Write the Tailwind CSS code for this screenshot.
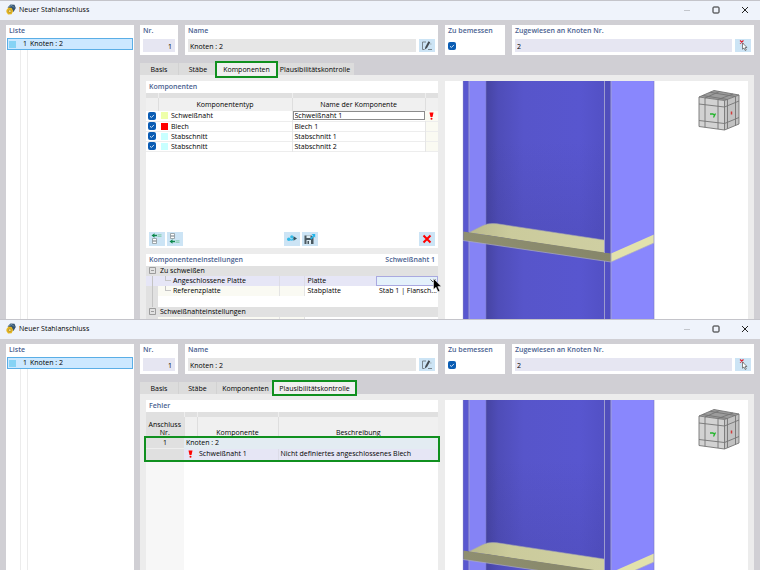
<!DOCTYPE html>
<html lang="de">

<head>
    <meta charset="UTF-8">
    <meta name="viewport" content="width=device-width, initial-scale=1.0">
    <title>Neuer Stahlanschluss</title>
    <script src="https://cdn.jsdelivr.net/npm/@tailwindcss/browser@4"></script>
</head>

<body class="h-screen overflow-hidden flex flex-col bg-[#d0cfd4] font-['Open_Sans','Noto_Sans',sans-serif] text-[7px] leading-[10px] text-black">

    <!-- Shared icons -->
    <svg class="absolute size-0" aria-hidden="true">
        <defs>
            <linearGradient id="web" x1="0" x2="1" y1="0" y2="0">
                <stop offset="0" stop-color="#4644a2" />
                <stop offset="0.1" stop-color="#4f4db8" />
                <stop offset="0.3" stop-color="#5755ca" />
                <stop offset="0.75" stop-color="#5856cf" />
                <stop offset="1" stop-color="#514fc2" />
            </linearGradient>
            <linearGradient id="shade" x1="0" x2="0" y1="0" y2="1">
                <stop offset="0" stop-color="#3a388c" stop-opacity="0" />
                <stop offset="1" stop-color="#3a388c" stop-opacity="0.2" />
            </linearGradient>
            <linearGradient id="plate" x1="0" x2="1" y1="0" y2="0">
                <stop offset="0" stop-color="#b9b98c" />
                <stop offset="0.3" stop-color="#cbcb9c" />
                <stop offset="1" stop-color="#cfcfa2" />
            </linearGradient>
            <linearGradient id="edge" x1="0" x2="1" y1="0" y2="0">
                <stop offset="0" stop-color="#8f8f70" />
                <stop offset="1" stop-color="#86866a" />
            </linearGradient>
        </defs>
        <symbol id="logo" viewBox="0 0 10 11">
            <path d="M1.5 3.5 4.5.6l4 .2L9.8 4 7.5 8 5 4.5z" fill="#35526f" />
            <path d="M3 2.5 6 1.5 8 3.5" fill="none" stroke="#7fa6c4" stroke-width=".8" />
            <path d="M.5 6 2.5 3.6l3.2.4L7.2 7 5.6 10.2l-3.6.2L.4 8z" fill="#e3b41f" />
            <circle cx="3.8" cy="7.2" r="1.4" fill="#f7e08c" stroke="#9c7b1a" stroke-width=".6" />
        </symbol>
        <symbol id="check" viewBox="0 0 8 8">
            <path d="M2 4.2 3.4 5.5 6 2.9" fill="none" stroke="#fff" stroke-width=".8" />
        </symbol>
        <symbol id="edit" viewBox="0 0 16 13">
            <path d="M7 3H3.5v7.500H5.500M9 10.500h4" fill="none" stroke="#6e7880" stroke-width=".9" />
            <path d="M5.800 10.500 6.300 8 9.500 2.200 11.200 3.200 8 9z" fill="#444c52" />
            <path d="M11 5h1.500" stroke="#99a5aa" stroke-width=".8" />
        </symbol>
        <symbol id="pick" viewBox="0 0 16 13">
            <path d="M5 1.500 8.500 4.500M8.500 1.500 5 4.500" stroke="#e02030" stroke-width="1.200" />
            <path d="M7.500 4v6.200l1.500-1.200 1.200 2.500 1.100-.5-1.200-2.500h2z" fill="#fff" stroke="#555" stroke-width=".7" />
        </symbol>
        <symbol id="insert-up" viewBox="0 0 16 14">
            <path d="M2.500 3.500 5.500 1.200v1.500H8v1.600H5.500v1.500z" fill="#0d8a4c" />
            <path d="M8.500 2.800h4M8.500 4.300h4" stroke="#6fc79a" stroke-width=".8" />
            <path d="M3.500 6.500h4v2.500h-4zM3.500 9h4v2.500h-4z" fill="#fff" stroke="#8b959b" stroke-width=".8" />
        </symbol>
        <symbol id="insert-down" viewBox="0 0 16 14">
            <path d="M3.500 1.500h4V4h-4zM3.500 4h4v2.500h-4z" fill="#fff" stroke="#8b959b" stroke-width=".8" />
            <path d="M2.500 9.500 5.500 7.200v1.500H8v1.600H5.500v1.500z" fill="#0d8a4c" />
            <path d="M8.500 8.800h4M8.500 10.300h4" stroke="#6fc79a" stroke-width=".8" />
        </symbol>
        <symbol id="link" viewBox="0 0 16 14">
            <circle cx="4.800" cy="7.200" r="1.800" fill="#32bbe8" />
            <circle cx="7.800" cy="4.800" r="1.600" fill="#32bbe8" />
            <path d="M5 7.500 8 8 10 6" fill="none" stroke="#32bbe8" stroke-width="1.200" />
            <path d="M9.500 4.300 13 6.500 9.500 8.800z" fill="#37525e" />
        </symbol>
        <symbol id="save" viewBox="0 0 16 14">
            <path d="M2.500 3.500h7l2 2v6.500h-9z" fill="#4a5961" />
            <path d="M4.500 3.500h4V6h-4zM4.500 8h4.500v4H4.500z" fill="#dcebf3" />
            <path d="M5.500 9h1.500v3H5.500z" fill="#4a5961" />
            <path d="M8 6.500 11 3.500 9.500 2h3.700v3.700L12 4.500 9.500 7.500z" fill="#22b5ea" />
        </symbol>
        <symbol id="delete" viewBox="0 0 16 14">
            <path d="M4.500 3.500 11.500 10.500M11.500 3.500 4.500 10.500" stroke="#f00" stroke-width="2" />
        </symbol>
        <symbol id="alert" viewBox="0 0 4 8">
            <path d="M0 .5h4L3 5H1z" fill="#f00" />
            <circle cx="2" cy="6.700" r="1" fill="#f00" />
        </symbol>
        <symbol id="minimize" viewBox="0 0 8 8">
            <path d="M1 4.500h6" stroke="#c3c6cc" stroke-width="1" />
        </symbol>
        <symbol id="maximize" viewBox="0 0 8 8">
            <rect x="1" y="1" width="6" height="6" rx=".8" fill="none" stroke="#222" stroke-width="1" />
        </symbol>
        <symbol id="close" viewBox="0 0 8 8">
            <path d="M1 1 7 7M7 1 1 7" stroke="#222" stroke-width="1" />
        </symbol>
        <symbol id="cube" viewBox="0 0 42 42">
            <path d="M1 8 16 1.500 41 6 26.500 11.500z" fill="#9c9c9c" />
            <path d="M1 8 26.500 11.500V41L1 37.500z" fill="#d2d2d2" />
            <path d="M26.500 11.500 41 6V35L26.500 41z" fill="#c2c2c2" />
            <path d="M1 8 16 1.500 41 6 26.500 11.500zM1 8V37.500L26.500 41V11.500M26.500 41 41 35V6M7 9V38.300M20 10.700V40M1 15 26.500 18 41 12M1 31.500 26.500 34.500 41 28.500M29.500 10.500V39.700M37.500 7.500V36.500M7 9 21.500 2.500M20 10.500 35 5M4.500 6.500 29.500 10.500M12 3.300 37.500 7.500" fill="none" stroke="#747474" stroke-width=".9" />
            <path d="M12 25h2.500M14.500 24.500l2 2M17.500 24.500 15.500 28.500" fill="none" stroke="#23b52c" stroke-width="1.300" />
            <path d="M33.500 22.500v3" stroke="#d03a3a" stroke-width="1.500" />
        </symbol>
        <!-- Column with stiffener plate -->
        <symbol id="column" viewBox="0 0 303 238">
            <rect x="18" width="191" height="238" fill="#8987fd" />
            <rect x="18" width="6" height="238" fill="#5957cf" />
            <rect x="24" width="17" height="238" fill="#8583f5" />
            <rect x="41" width="125" height="238" fill="url(#web)" />
            <path d="M41 60H159V160L41 144z" fill="url(#shade)" />
            <path d="M24 151.500 37 145Q44 141 57 143.500L159 159V172z" fill="url(#plate)" />
            <path d="M24 151.500 37 145Q44 141 57 143.500L159 159" fill="none" stroke="#a3a4b0" stroke-width=".6" />
            <path d="M18 150.500 166 172.500V181L18 159.500z" fill="url(#edge)" />
            <path d="M166 172.500 209 153.500V162L166 181z" fill="#e2e2ac" />
            <rect x="159.500" width="6" height="171.500" fill="#504ebc" />
            <path d="M24 0V151M24 160V238M159.500 0V172M159.500 180V238M166 0V238" stroke="#a5a4cf" stroke-width=".9" />
            <path d="M41 0V144M41 163V238M18.300 0V238M209 0V238" stroke="#7b7abf" stroke-width=".6" />
            <path d="M18 159.500 166 181 209 162" fill="none" stroke="#aaaac4" stroke-width=".7" />
        </symbol>
    </svg>

    <!-- Window 1: Komponenten -->
    <section class="relative shrink-0 border-t border-[#c4c4ca]">
        <header class="flex items-center h-[19px] pl-1.5 pr-[11px] pb-0.5 bg-[#eff3fb]">
            <svg class="w-[10px] h-[11px]"><use href="#logo" /></svg>
            <h1 class="ml-[3px] flex-1">Neuer Stahlanschluss</h1>
            <div class="flex gap-[21px]">
                <button aria-label="Minimieren"><svg class="size-2"><use href="#minimize" /></svg></button>
                <button aria-label="Maximieren"><svg class="size-2"><use href="#maximize" /></svg></button>
                <button aria-label="Schließen"><svg class="size-2"><use href="#close" /></svg></button>
            </div>
        </header>

        <div class="flex gap-1.5 px-1.5 pt-[5px]">
            <!-- List -->
            <aside class="w-[128px] shrink-0 flex flex-col bg-white pr-px">
                <h2 class="h-[13px] pl-[3px] pt-px text-[#4a6190] font-semibold">Liste</h2>
                <div class="flex items-center h-3 ml-px border border-[#5aaee6] bg-[#cce8ff]">
                    <span class="ml-px size-[7px] bg-[#86d3f5]"></span>
                    <span class="w-[11px] text-right">1</span>
                    <span class="ml-[3px]">Knoten : 2</span>
                </div>
                <div class="flex-1 ml-3.5 w-2 border-x border-[#ececec]"></div>
            </aside>

            <div class="flex-1 min-w-0">
                <div class="grid grid-cols-[38px_253px_60px_1fr] gap-x-[7px]">
                    <div class="h-[30px] px-[3px] bg-white">
                        <label for="nr-1" class="block h-3.5 pt-px text-[#4a6190] font-semibold">Nr.</label>
                        <input id="nr-1" value="1" class="block w-full h-[13px] px-[3px] pt-px bg-[#e6e6f2] text-right">
                    </div>
                    <div class="h-[30px] px-[3px] bg-white">
                        <label for="name-1" class="block h-3.5 pt-px text-[#4a6190] font-semibold">Name</label>
                        <div class="flex gap-[3px]">
                            <input id="name-1" value="Knoten : 2" class="flex-1 min-w-0 h-[13px] px-0.5 pt-px bg-[#e6e6e6]">
                            <button aria-label="Bearbeiten" class="bg-[#cce4f5]"><svg class="w-4 h-[13px]"><use href="#edit" /></svg></button>
                        </div>
                    </div>
                    <div class="h-[30px] px-[3px] bg-white">
                        <label for="design-1" class="block h-[17px] pt-px text-[#4a6190] font-semibold whitespace-nowrap">Zu bemessen</label>
                        <span class="grid size-2">
                            <input id="design-1" type="checkbox" checked class="col-start-1 row-start-1 appearance-none size-2 rounded-xs bg-[#0a5cb3]">
                            <svg class="col-start-1 row-start-1 size-2 pointer-events-none"><use href="#check" /></svg>
                        </span>
                    </div>
                    <div class="h-[30px] px-[3px] bg-white">
                        <label for="assigned-1" class="block h-3.5 pt-px text-[#4a6190] font-semibold">Zugewiesen an Knoten Nr.</label>
                        <div class="flex gap-[3px]">
                            <input id="assigned-1" value="2" class="flex-1 min-w-0 h-[13px] px-0.5 pt-px bg-[#e6e6f2]">
                            <button aria-label="Knoten wählen" class="bg-[#cce4f5]"><svg class="w-4 h-[13px]"><use href="#pick" /></svg></button>
                        </div>
                    </div>
                </div>

                <!-- Tabs -->
                <nav class="flex h-3 mt-2">
                    <button class="w-[39px] pt-px bg-[#dcdcdc] border-r border-[#d2d2d2]">Basis</button>
                    <button class="w-[38px] pt-px bg-[#dcdcdc]">Stäbe</button>
                    <button class="relative z-10 w-[59px] h-[13px] bg-[#f0f0f0] outline-2 outline-[#10901f]">Komponenten</button>
                    <button class="w-[78px] pt-px bg-[#dcdcdc]">Plausibilitätskontrolle</button>
                </nav>

                <div class="flex gap-[7px] px-1.5 pt-1.5 bg-[#ececec]">
                    <div class="w-[292px] shrink-0">
                        <div class="bg-white">
                            <h2 class="h-3 pl-[3px] pt-px text-[#4a6190] font-semibold">Komponenten</h2>
                            <table class="w-full table-fixed border-collapse">
                                <colgroup>
                                    <col class="w-3">
                                    <col class="w-[134px]">
                                    <col>
                                    <col class="w-[13px]">
                                </colgroup>
                                <thead>
                                    <tr class="h-[5px] bg-[#e0e0e0]">
                                        <td class="border-r border-[#eee]"></td>
                                        <td class="border-r border-[#eee]"></td>
                                        <td class="border-r border-[#eee]"></td>
                                        <td></td>
                                    </tr>
                                    <tr class="h-[13px] bg-[#f0f0f0]">
                                        <th class="p-0 border-r border-[#dedede]"></th>
                                        <th class="p-0 border-r border-[#dedede] font-normal">Komponententyp</th>
                                        <th class="p-0 border-r border-[#dedede] font-normal">Name der Komponente</th>
                                        <th class="p-0"></th>
                                    </tr>
                                </thead>
                                <tbody class="leading-[9px]">
                                    <tr class="h-[10px] border-b border-[#ededed]">
                                        <td class="p-0 pl-0.5">
                                            <span class="grid size-2">
                                                <input type="checkbox" checked aria-label="Schweißnaht 1" class="col-start-1 row-start-1 appearance-none size-2 rounded-xs bg-[#0a5cb3]">
                                                <svg class="col-start-1 row-start-1 size-2 pointer-events-none"><use href="#check" /></svg>
                                            </span>
                                        </td>
                                        <td class="p-0 border-r border-[#e6e6e6]">
                                            <div class="flex items-center gap-[3px] pl-[3px]"><span class="size-[7px] bg-[#eeffaa]"></span>Schweißnaht</div>
                                        </td>
                                        <td class="p-0"><input value="Schweißnaht 1" aria-label="Name" class="block w-full h-[9px] px-0.5 outline outline-[#8c8c8c] -outline-offset-1"></td>
                                        <td class="p-0 bg-[#fafaf2]"><svg class="mx-auto w-[5px] h-2"><use href="#alert" /></svg></td>
                                    </tr>
                                    <tr class="h-[10px] border-b border-[#ededed]">
                                        <td class="p-0 pl-0.5">
                                            <span class="grid size-2">
                                                <input type="checkbox" checked aria-label="Blech 1" class="col-start-1 row-start-1 appearance-none size-2 rounded-xs bg-[#0a5cb3]">
                                                <svg class="col-start-1 row-start-1 size-2 pointer-events-none"><use href="#check" /></svg>
                                            </span>
                                        </td>
                                        <td class="p-0 border-r border-[#e6e6e6]">
                                            <div class="flex items-center gap-[3px] pl-[3px]"><span class="size-[7px] bg-[#ff0000]"></span>Blech</div>
                                        </td>
                                        <td class="p-0 pl-0.5 border-r border-[#e6e6e6]">Blech 1</td>
                                        <td class="p-0 bg-[#fafaf2]"></td>
                                    </tr>
                                    <tr class="h-[10px] border-b border-[#ededed]">
                                        <td class="p-0 pl-0.5">
                                            <span class="grid size-2">
                                                <input type="checkbox" checked aria-label="Stabschnitt 1" class="col-start-1 row-start-1 appearance-none size-2 rounded-xs bg-[#0a5cb3]">
                                                <svg class="col-start-1 row-start-1 size-2 pointer-events-none"><use href="#check" /></svg>
                                            </span>
                                        </td>
                                        <td class="p-0 border-r border-[#e6e6e6]">
                                            <div class="flex items-center gap-[3px] pl-[3px]"><span class="size-[7px] bg-[#c8ffff]"></span>Stabschnitt</div>
                                        </td>
                                        <td class="p-0 pl-0.5 border-r border-[#e6e6e6]">Stabschnitt 1</td>
                                        <td class="p-0 bg-[#fafaf2]"></td>
                                    </tr>
                                    <tr class="h-[10px] border-b border-[#ededed]">
                                        <td class="p-0 pl-0.5">
                                            <span class="grid size-2">
                                                <input type="checkbox" checked aria-label="Stabschnitt 2" class="col-start-1 row-start-1 appearance-none size-2 rounded-xs bg-[#0a5cb3]">
                                                <svg class="col-start-1 row-start-1 size-2 pointer-events-none"><use href="#check" /></svg>
                                            </span>
                                        </td>
                                        <td class="p-0 border-r border-[#e6e6e6]">
                                            <div class="flex items-center gap-[3px] pl-[3px]"><span class="size-[7px] bg-[#c8ffff]"></span>Stabschnitt</div>
                                        </td>
                                        <td class="p-0 pl-0.5 border-r border-[#e6e6e6]">Stabschnitt 2</td>
                                        <td class="p-0 bg-[#fafaf2]"></td>
                                    </tr>
                                </tbody>
                            </table>
                            <div class="flex justify-between px-[3px] pt-20 pb-0.5">
                                <div class="flex gap-0.5">
                                    <button aria-label="Davor einfügen" class="bg-[#cce4f5]"><svg class="w-4 h-3.5"><use href="#insert-up" /></svg></button>
                                    <button aria-label="Danach einfügen" class="bg-[#cce4f5]"><svg class="w-4 h-3.5"><use href="#insert-down" /></svg></button>
                                </div>
                                <div class="flex gap-0.5">
                                    <button aria-label="Verknüpfen" class="bg-[#cce4f5]"><svg class="w-4 h-3.5"><use href="#link" /></svg></button>
                                    <button aria-label="Speichern" class="bg-[#cce4f5]"><svg class="w-4 h-3.5"><use href="#save" /></svg></button>
                                </div>
                                <button aria-label="Löschen" class="bg-[#cce4f5]"><svg class="w-4 h-3.5"><use href="#delete" /></svg></button>
                            </div>
                        </div>

                        <!-- Component settings -->
                        <div class="mt-1.5 bg-white">
                            <div class="flex justify-between h-3 px-[3px] pt-px text-[#4a6190] font-semibold">
                                <h2>Komponenteneinstellungen</h2>
                                <span>Schweißnaht 1</span>
                            </div>
                            <table class="w-full table-fixed border-collapse">
                                <colgroup>
                                    <col class="w-3">
                                    <col class="w-[121px]">
                                    <col class="w-[25px]">
                                    <col class="w-[72px]">
                                    <col>
                                </colgroup>
                                <tbody>
                                    <tr class="h-[10px] bg-[#e1e1e1]">
                                        <td class="p-0 pl-[3px]">
                                            <svg class="size-[7px]" viewBox="0 0 7 7">
                                                <path d="M.5.5h6v6h-6zM2 3.500h3" fill="none" stroke="#8a8a8a" stroke-width=".8" />
                                            </svg>
                                        </td>
                                        <td colspan="4" class="p-0 pl-0.5">Zu schweißen</td>
                                    </tr>
                                    <tr class="h-[10px] bg-[#e6e6f6]">
                                        <td class="p-0"><span class="block ml-1.5 h-[10px] border-l border-[#c4c4c4]"></span></td>
                                        <td class="p-0">
                                            <div class="flex gap-0.5 pl-[7px]"><span class="w-1.5 h-[5px] border-l border-b border-[#c4c4c4]"></span>Angeschlossene Platte</div>
                                        </td>
                                        <td class="p-0 border-x border-[#dcdce6]"></td>
                                        <td class="p-0 pl-[3px]">Platte</td>
                                        <td class="p-0">
                                            <div class="grid">
                                                <select aria-label="Platte" class="col-start-1 row-start-1 appearance-none w-full h-[10px] border border-[#a9a9e0] bg-[#e4f1fb]">
                                                    <option></option>
                                                </select>
                                                <svg class="col-start-1 row-start-1 justify-self-end self-center mr-0.5 w-1.5 h-1 pointer-events-none" viewBox="0 0 6 4">
                                                    <path d="M.5.5 3 3 5.500.5" fill="none" stroke="#333" stroke-width=".8" />
                                                </svg>
                                            </div>
                                        </td>
                                    </tr>
                                    <tr class="h-[10px]">
                                        <td class="p-0 bg-[#e1e1e1]"><span class="block ml-1.5 h-[10px] border-l border-[#c4c4c4]"></span></td>
                                        <td class="p-0 bg-[#fafaf3]">
                                            <div class="flex gap-0.5 pl-[7px]"><span class="w-1.5 h-[5px] border-l border-b border-[#c4c4c4]"></span>Referenzplatte</div>
                                        </td>
                                        <td class="p-0 border-x border-[#e4e4e4] bg-[#fafaf3]"></td>
                                        <td class="p-0 pl-[3px]">Stabplatte</td>
                                        <td class="p-0 pl-[3px] whitespace-nowrap">Stab 1 | Flansch...</td>
                                    </tr>
                                    <tr class="h-[11px]">
                                        <td class="p-0 bg-[#e1e1e1]"><span class="block ml-1.5 h-[11px] border-l border-[#c4c4c4]"></span></td>
                                        <td colspan="4" class="p-0"></td>
                                    </tr>
                                    <tr class="h-[10px] bg-[#e1e1e1]">
                                        <td class="p-0 pl-[3px]">
                                            <svg class="size-[7px]" viewBox="0 0 7 7">
                                                <path d="M.5.5h6v6h-6zM2 3.500h3" fill="none" stroke="#8a8a8a" stroke-width=".8" />
                                            </svg>
                                        </td>
                                        <td colspan="4" class="p-0 pl-0.5">Schweißnahteinstellungen</td>
                                    </tr>
                                    <tr class="h-0.5">
                                        <td class="p-0 bg-[#e1e1e1]"></td>
                                        <td class="p-0 bg-[#fafaf3]"></td>
                                        <td class="p-0 border-x border-[#e4e4e4] bg-[#fafaf3]"></td>
                                        <td class="p-0"></td>
                                        <td class="p-0"></td>
                                    </tr>
                                </tbody>
                            </table>
                        </div>
                    </div>

                    <!-- 3D view -->
                    <div class="relative flex-1 bg-white">
                        <svg class="w-[303px] h-[238px]"><use href="#column" /></svg>
                        <svg class="absolute top-2 right-2 size-[42px]"><use href="#cube" /></svg>
                        <svg class="absolute top-[197px] -left-3 w-[9px] h-[15px]" viewBox="0 0 9 15">
                            <path d="M.5.5v11l2.500-2.300 2 4.500 1.800-.8-2-4.300h3.500z" fill="#000" stroke="#fff" stroke-width=".5" />
                        </svg>
                    </div>
                </div>
            </div>
        </div>
    </section>

    <!-- Window 2: Plausibilitätskontrolle -->
    <section class="relative flex-1 min-h-0 flex flex-col border-t border-[#c4c4ca]">
        <header class="flex items-center h-[19px] shrink-0 pl-1.5 pr-[11px] pb-0.5 bg-[#eff3fb]">
            <svg class="w-[10px] h-[11px]"><use href="#logo" /></svg>
            <h1 class="ml-[3px] flex-1">Neuer Stahlanschluss</h1>
            <div class="flex gap-[21px]">
                <button aria-label="Minimieren"><svg class="size-2"><use href="#minimize" /></svg></button>
                <button aria-label="Maximieren"><svg class="size-2"><use href="#maximize" /></svg></button>
                <button aria-label="Schließen"><svg class="size-2"><use href="#close" /></svg></button>
            </div>
        </header>

        <div class="flex-1 min-h-0 flex gap-1.5 px-1.5 pt-[5px]">
            <!-- List -->
            <aside class="w-[128px] shrink-0 flex flex-col bg-white pr-px">
                <h2 class="h-[13px] pl-[3px] pt-px text-[#4a6190] font-semibold">Liste</h2>
                <div class="flex items-center h-3 ml-px border border-[#5aaee6] bg-[#cce8ff]">
                    <span class="ml-px size-[7px] bg-[#86d3f5]"></span>
                    <span class="w-[11px] text-right">1</span>
                    <span class="ml-[3px]">Knoten : 2</span>
                </div>
                <div class="flex-1 ml-3.5 w-2 border-x border-[#ececec]"></div>
            </aside>

            <div class="flex-1 min-w-0 flex flex-col">
                <div class="grid grid-cols-[38px_253px_60px_1fr] gap-x-[7px]">
                    <div class="h-[30px] px-[3px] bg-white">
                        <label for="nr-2" class="block h-3.5 pt-px text-[#4a6190] font-semibold">Nr.</label>
                        <input id="nr-2" value="1" class="block w-full h-[13px] px-[3px] pt-px bg-[#e6e6f2] text-right">
                    </div>
                    <div class="h-[30px] px-[3px] bg-white">
                        <label for="name-2" class="block h-3.5 pt-px text-[#4a6190] font-semibold">Name</label>
                        <div class="flex gap-[3px]">
                            <input id="name-2" value="Knoten : 2" class="flex-1 min-w-0 h-[13px] px-0.5 pt-px bg-[#e6e6e6]">
                            <button aria-label="Bearbeiten" class="bg-[#cce4f5]"><svg class="w-4 h-[13px]"><use href="#edit" /></svg></button>
                        </div>
                    </div>
                    <div class="h-[30px] px-[3px] bg-white">
                        <label for="design-2" class="block h-[17px] pt-px text-[#4a6190] font-semibold whitespace-nowrap">Zu bemessen</label>
                        <span class="grid size-2">
                            <input id="design-2" type="checkbox" checked class="col-start-1 row-start-1 appearance-none size-2 rounded-xs bg-[#0a5cb3]">
                            <svg class="col-start-1 row-start-1 size-2 pointer-events-none"><use href="#check" /></svg>
                        </span>
                    </div>
                    <div class="h-[30px] px-[3px] bg-white">
                        <label for="assigned-2" class="block h-3.5 pt-px text-[#4a6190] font-semibold">Zugewiesen an Knoten Nr.</label>
                        <div class="flex gap-[3px]">
                            <input id="assigned-2" value="2" class="flex-1 min-w-0 h-[13px] px-0.5 pt-px bg-[#e6e6f2]">
                            <button aria-label="Knoten wählen" class="bg-[#cce4f5]"><svg class="w-4 h-[13px]"><use href="#pick" /></svg></button>
                        </div>
                    </div>
                </div>

                <!-- Tabs -->
                <nav class="flex h-3 shrink-0 mt-2">
                    <button class="w-[39px] pt-px bg-[#dcdcdc] border-r border-[#d2d2d2]">Basis</button>
                    <button class="w-[38px] pt-px bg-[#dcdcdc] border-r border-[#d2d2d2]">Stäbe</button>
                    <button class="w-[57px] pt-px bg-[#dcdcdc]">Komponenten</button>
                    <button class="relative z-10 w-[81px] pt-px bg-[#f0f0f0] outline-2 outline-[#10901f]">Plausibilitätskontrolle</button>
                </nav>

                <div class="flex-1 min-h-0 flex gap-[7px] px-1.5 pt-1.5 bg-[#ececec]">
                    <div class="w-[292px] shrink-0 flex flex-col bg-white">
                        <h2 class="h-3 pl-[3px] pt-px text-[#4a6190] font-semibold">Fehler</h2>
                        <table class="w-full table-fixed border-collapse">
                            <colgroup>
                                <col class="w-[38px]">
                                <col class="w-[13px]">
                                <col class="w-[81px]">
                                <col>
                            </colgroup>
                            <thead>
                                <tr class="h-[5px] bg-[#e0e0e0]">
                                    <td class="border-r border-[#eee]"></td>
                                    <td class="border-r border-[#eee]"></td>
                                    <td class="border-r border-[#eee]"></td>
                                    <td></td>
                                </tr>
                                <tr class="h-[21px] bg-[#f0f0f0] leading-[8px]">
                                    <th class="p-0 pb-px align-bottom font-normal bg-[#e0e0e0]">Anschluss<br>Nr.</th>
                                    <th class="p-0 border-x border-[#dedede]"></th>
                                    <th class="p-0 pb-px align-bottom border-r border-[#dedede] font-normal">Komponente</th>
                                    <th class="p-0 pb-px align-bottom font-normal">Beschreibung</th>
                                </tr>
                            </thead>
                            <tbody class="relative z-10 outline-2 outline-[#10901f]">
                                <tr class="h-[10px] bg-[#e3ecf2]">
                                    <td class="p-0 text-center bg-[#e0e0e0]">1</td>
                                    <td colspan="3" class="p-0 pl-0.5">Knoten : 2</td>
                                </tr>
                                <tr class="h-[11px] bg-[#e6e6f5]">
                                    <td class="p-0 bg-[#e0e0e0] border-t border-[#eee]"></td>
                                    <td class="p-0"><svg class="mx-auto w-[5px] h-2"><use href="#alert" /></svg></td>
                                    <td class="p-0 pl-0.5">Schweißnaht 1</td>
                                    <td class="p-0 pl-0.5 border-l border-[#dcdce8]">Nicht definiertes angeschlossenes Blech</td>
                                </tr>
                            </tbody>
                        </table>
                        <div class="flex-1 w-[38px] bg-[#f7f7f7]"></div>
                    </div>

                    <!-- 3D view -->
                    <div class="relative flex-1 overflow-hidden bg-white">
                        <svg class="w-[303px] h-[238px]"><use href="#column" /></svg>
                        <svg class="absolute top-2 right-2 size-[42px]"><use href="#cube" /></svg>
                    </div>
                </div>
            </div>
        </div>
    </section>
</body>

</html>
